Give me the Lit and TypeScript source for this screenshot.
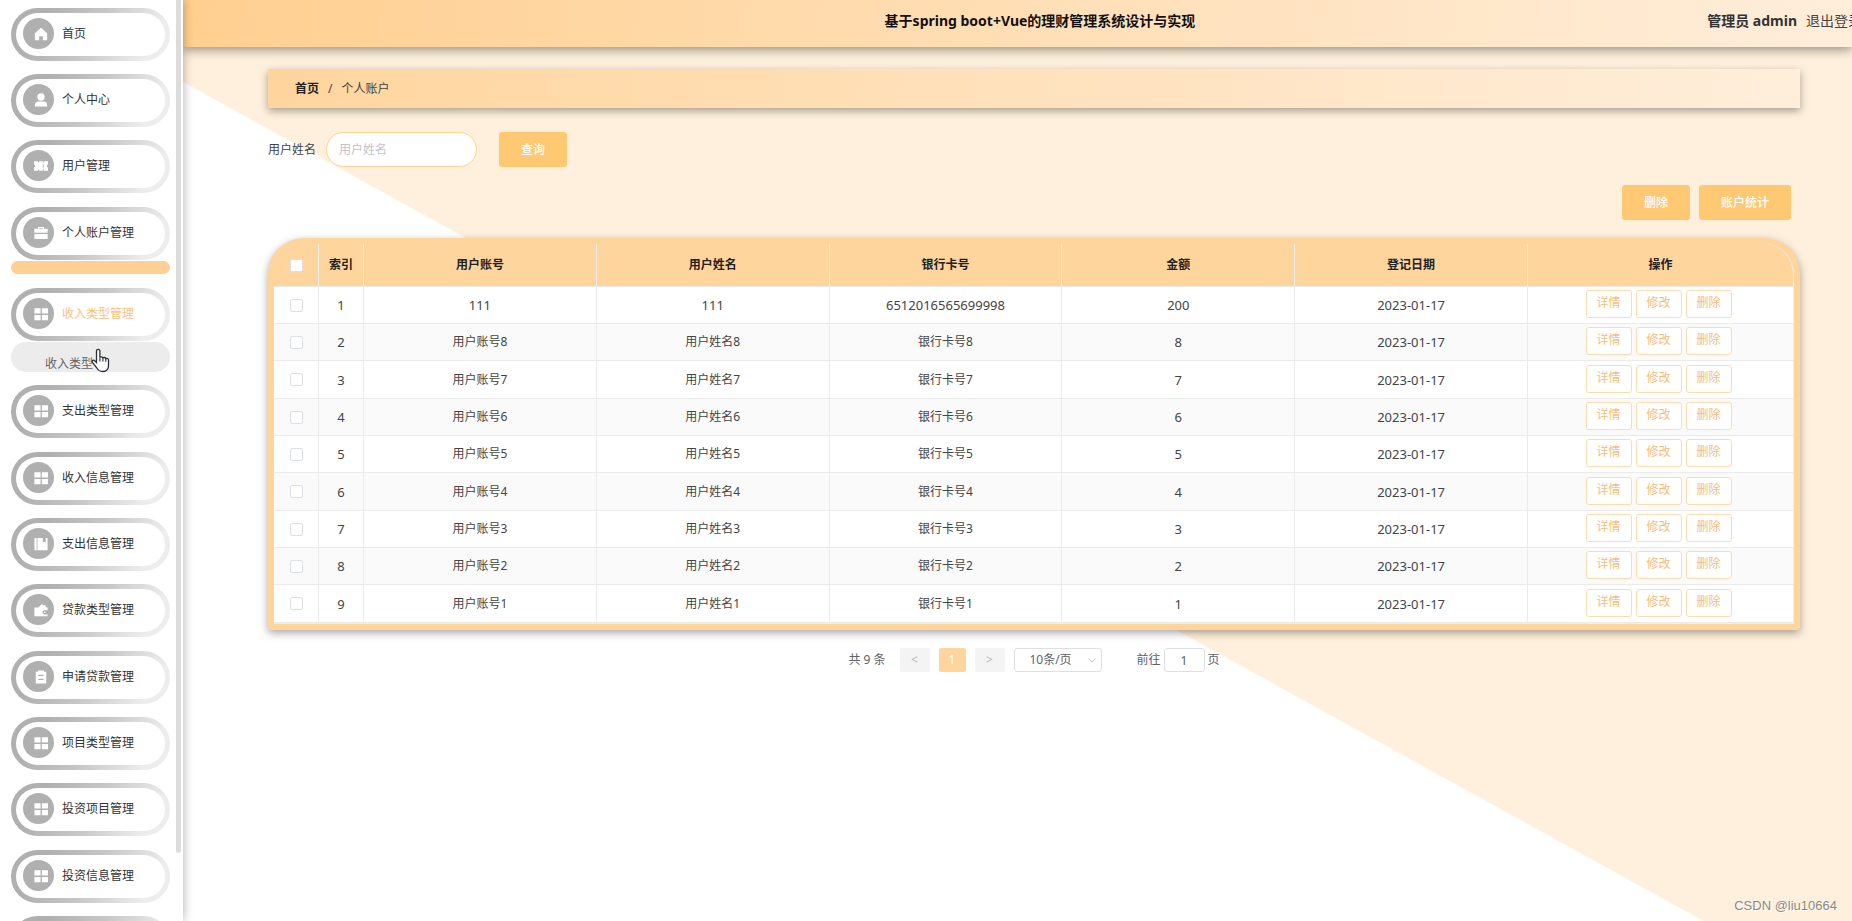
import { LitElement, html, css, svg } from "lit";
import { customElement, state } from "lit/decorators.js";

const ICONS: Record<string, unknown> = {
  home: svg`<path d="M8 .8 15 7v7.2a1 1 0 0 1-1 1h-3.9v-4.6H5.9v4.6H2a1 1 0 0 1-1-1V7z"/>`,
  user: svg`<circle cx="8" cy="4.6" r="4.2"/><path d="M1 15.4v-1.6a4 4 0 0 1 4-4h6a4 4 0 0 1 4 4v1.6z"/>`,
  ticket: svg`<path d="M0 2.6h4.6v1.2h1.2V2.6H16v3.6a1.9 1.9 0 0 0 0 3.6v3.6H5.8v-1.2H4.6v1.2H0V9.800a1.900 1.900 0 0 0 0-3.600z"/><path class="cut" d="M10.600 2v2.400M10.600 6v4M10.600 11.600V14"/>`,
  bag: svg`<path d="M4.500 3V1h7v2h4.100v4.600H.4V3zm1.500 0h4v-.8H6z" fill-rule="evenodd"/><path d="M.4 9.200h15.200v5.600H.4z"/>`,
  grid: svg`<path d="M.5 1.500h7v6h-7zM9 1.500h7v6H9zM.5 9h7v6h-7zM9 9h7v6H9z"/>`,
  book: svg`<path d="M.5 1h2.600v14H.5zM4 1h6v5.600l1.700-1.500 1.700 1.500V1h2.100v14H4z"/>`,
  wallet: svg`<path d="M.5 5.200h4.300L9.200 1l1.500 1.600 2-.4 1.500 3h1.300v3.200h-3.600a2.300 2.300 0 0 0 0 4.600h3.600v2H.5z"/><circle cx="12.200" cy="10.700" r=".9"/>`,
  clipboard: svg`<path fill-rule="evenodd" d="M2 2h2.600V.6h6.800V2H14v13.400H2zm3 3.500v1.300h6V5.500zm0 4.500v1.300h6V10z"/>`,
};

interface MenuEntry {
  label: string;
  icon: string;
  child?: string;
  bar?: boolean;
}

const MENU: MenuEntry[] = [
  { label: "首页", icon: "home" },
  { label: "个人中心", icon: "user" },
  { label: "用户管理", icon: "ticket" },
  { label: "个人账户管理", icon: "bag", bar: true },
  { label: "收入类型管理", icon: "grid", child: "收入类型" },
  { label: "支出类型管理", icon: "grid" },
  { label: "收入信息管理", icon: "grid" },
  { label: "支出信息管理", icon: "book" },
  { label: "贷款类型管理", icon: "wallet" },
  { label: "申请贷款管理", icon: "clipboard" },
  { label: "项目类型管理", icon: "grid" },
  { label: "投资项目管理", icon: "grid" },
  { label: "投资信息管理", icon: "grid" },
  { label: "", icon: "grid" },
];

@customElement("side-menu")
export class SideMenu extends LitElement {
  static styles = css`
    :host {
      display: flex;
      justify-content: space-between;
      height: 100vh;
      overflow: hidden;
      background: #fff;
      box-shadow: 0 0 10px rgba(0, 0, 0, 0.32);
      position: relative;
      z-index: 2;
    }
    .list {
      list-style: none;
      margin: 0;
      padding: 8px 0 0 11px;
      width: 159px;
    }
    .item {
      margin-bottom: 13px;
    }
    .item:nth-child(3n) {
      margin-bottom: 14px;
    }
    .link {
      display: flex;
      align-items: center;
      gap: 8px;
      box-sizing: border-box;
      height: 53px;
      padding: 0 7px 2px;
      border: 5px solid transparent;
      border-radius: 27px;
      background:
        linear-gradient(#fff, #fff) padding-box,
        linear-gradient(120deg, #b0b0b0 20%, #c6c6c6 50%, #ededed 85%) border-box;
      color: #333;
      font-size: 12px;
      line-height: 20px;
      text-decoration: none;
    }
    .link.open {
      color: #f8c27d;
    }
    .disc {
      display: flex;
      align-items: center;
      justify-content: center;
      box-sizing: border-box;
      width: 31px;
      height: 31px;
      padding-left: 5px;
      border-radius: 50%;
      background: #b0b0b0;
    }
    .icon {
      width: 14px;
      height: 14px;
      fill: #fff;
    }
    .cut {
      stroke: #b0b0b0;
      stroke-width: 1;
    }
    .bar {
      height: 13px;
      margin: 1px 0 14px;
      border-radius: 7px;
      background: #ffd094;
    }
    .sub {
      display: block;
      box-sizing: border-box;
      height: 30px;
      margin-top: 1px;
      padding: 12px 0 0 34px;
      border-radius: 15px;
      background: #edecec;
      color: #666;
      font-size: 12px;
      line-height: 20px;
      text-decoration: none;
      overflow: hidden;
    }
    .thumb {
      width: 5px;
      height: 92.6%;
      margin-right: 2px;
      border-radius: 0 0 3px 3px;
      background: #dcdcdc;
    }
    .pointer {
      position: absolute;
      left: 91px;
      top: 348px;
      width: 19px;
      height: 25px;
    }
  `;

  render() {
    return html`
      <ul class="list">
        ${MENU.map(
          (m) => html`<li class="item">
            <a class="link ${m.child ? "open" : ""}" href="#">
              <span class="disc"><svg class="icon" viewBox="0 0 16 16" aria-hidden="true">${ICONS[m.icon]}</svg></span>
              <span>${m.label}</span>
            </a>
            ${m.bar ? html`<div class="bar"></div>` : ""}
            ${m.child ? html`<a class="sub" href="#">${m.child}</a>` : ""}
          </li>`
        )}
      </ul>
      <div class="thumb"></div>
      <svg class="pointer" viewBox="0 0 19 25" aria-hidden="true">
        <path
          d="M5.500 14.500V3a1.700 1.700 0 0 1 3.400 0v6.500c.5-1 2.600-1 3 .4.700-.8 2.600-.5 2.900.7.900-.6 2.700-.2 2.700 1.500v5.400c0 3.500-2 6-5.600 6-3.300 0-4.600-1-6-3.500L1.300 14.200c-.7-1.500 1.200-2.800 2.400-1.500z"
          fill="#fff"
          stroke="#2b2f3a"
          stroke-width="1.300"
        />
        <path d="M8.900 9.500v4M11.900 10v3.500M14.800 10.800v3" stroke="#2b2f3a" stroke-width="1.100" fill="none" />
      </svg>
    `;
  }
}

interface Row {
  account: string;
  name: string;
  card: string;
  amount: string;
}

const ROWS: Row[] = [
  { account: "111", name: "111", card: "6512016565699998", amount: "200" },
  ...[8, 7, 6, 5, 4, 3, 2, 1].map((n) => ({
    account: `用户账号${n}`,
    name: `用户姓名${n}`,
    card: `银行卡号${n}`,
    amount: `${n}`,
  })),
];

@customElement("account-table")
export class AccountTable extends LitElement {
  static styles = css`
    :host {
      display: block;
      box-sizing: border-box;
      border: 6px solid #ffd59e;
      border-radius: 36px 36px 2px 2px;
      background: #ffd59e;
      box-shadow: 0 3px 8px rgba(0, 0, 0, 0.35);
    }
    .table {
      width: 100%;
      table-layout: fixed;
      border-collapse: separate;
      border-spacing: 0;
      border-right: 1px solid #ebeef5;
      border-bottom: 1px solid #ebeef5;
      border-radius: 30px 30px 0 0;
      color: #444;
      font-size: 12px;
      line-height: 20px;
      text-align: center;
    }
    .narrow {
      width: 45px;
    }
    .wide {
      width: 265px;
    }
    th,
    td {
      box-sizing: border-box;
      padding: 0;
      border-right: 1px solid #ebebeb;
      border-bottom: 1px solid #ebebeb;
    }
    th:last-child,
    td:last-child {
      border-right: 0;
    }
    th {
      height: 43px;
      color: #222;
      font-weight: 600;
    }
    td {
      height: 37px;
      background: #fff;
    }
    tr:nth-child(3n) td {
      height: 38px;
    }
    tbody tr:nth-child(even) td {
      background: #fafafa;
    }
    .num {
      font-size: 13px;
    }
    .check {
      appearance: none;
      display: block;
      box-sizing: border-box;
      width: 13px;
      height: 13px;
      margin: 0 auto;
      border: 1px solid #dcdfe6;
      border-radius: 2px;
      background: #fff;
    }
    .ops {
      display: flex;
      justify-content: center;
      gap: 4px;
      padding: 0 4px 2px 0;
    }
    .op {
      box-sizing: border-box;
      width: 46px;
      height: 28px;
      padding: 0 0 2px;
      border: 1px solid #ffdcab;
      border-radius: 3px;
      background: #fff;
      color: #f5bd7c;
      font: inherit;
    }
  `;

  render() {
    return html`
      <table class="table">
        <colgroup>
          <col class="narrow" /><col class="narrow" /><col /><col /><col /><col /><col /><col class="wide" />
        </colgroup>
        <thead>
          <tr>
            <th><input class="check" type="checkbox" aria-label="全选" /></th>
            ${["索引", "用户账号", "用户姓名", "银行卡号", "金额", "登记日期", "操作"].map((h) => html`<th>${h}</th>`)}
          </tr>
        </thead>
        <tbody>
          ${ROWS.map(
            (r, i) => html`<tr>
              <td><input class="check" type="checkbox" aria-label="选择" /></td>
              <td class="num">${i + 1}</td>
              <td class=${i === 0 ? "num" : ""}>${r.account}</td>
              <td class=${i === 0 ? "num" : ""}>${r.name}</td>
              <td class=${i === 0 ? "num" : ""}>${r.card}</td>
              <td class="num">${r.amount}</td>
              <td class="num">2023-01-17</td>
              <td>
                <div class="ops">
                  ${["详情", "修改", "删除"].map((t) => html`<button class="op" type="button">${t}</button>`)}
                </div>
              </td>
            </tr>`
          )}
        </tbody>
      </table>
    `;
  }
}

@customElement("app-root")
export class AppRoot extends LitElement {
  @state() private page = "1";

  static styles = css`
    :host {
      display: grid;
      grid-template-columns: 183px minmax(0, 1fr);
      position: relative;
      height: 100vh;
      overflow: hidden;
      font-family: "Noto Sans", "Noto Sans CJK SC", sans-serif;
      background: #fff;
    }
    .main {
      min-width: 0;
      background: linear-gradient(to bottom left, #fef0dc 54.4%, #fff 54.5%);
    }
    .header {
      overflow: hidden;
      background: linear-gradient(100deg, #ffcf90, #ffeedb);
    }
    .header-wrap {
      box-shadow: 0 3px 10px rgba(0, 0, 0, 0.4);
    }
    .header-row {
      display: grid;
      grid-template-columns: 1fr auto 1fr;
      height: 47px;
      margin-right: -45px;
      padding-bottom: 6px;
      box-sizing: border-box;
      align-items: center;
      font-size: 14px;
      line-height: 20px;
      color: #333;
    }
    .title {
      grid-column: 2;
      margin: 0;
      font-size: 14px;
      font-weight: 700;
      color: #111;
    }
    .account {
      display: flex;
      justify-content: flex-end;
      gap: 9px;
      padding-right: 35px;
      white-space: nowrap;
    }
    .who {
      font-weight: 700;
    }
    .logout {
      color: #444;
      text-decoration: none;
    }
    .content {
      padding: 22px 52px 0 85px;
      font-size: 12px;
      line-height: 20px;
      color: #444;
    }
    .crumbs {
      display: flex;
      align-items: center;
      gap: 9px;
      height: 39px;
      padding: 0 27px;
      background: linear-gradient(100deg, #ffd59e, #ffeedb);
      box-shadow: 0 3px 8px rgba(0, 0, 0, 0.35);
    }
    .crumb-home {
      color: #222;
      font-weight: 600;
      text-decoration: none;
    }
    .search {
      display: flex;
      align-items: center;
      margin-top: 24px;
    }
    .field {
      box-sizing: border-box;
      width: 151px;
      height: 35px;
      margin: 0 22px 0 10px;
      padding: 0 12px;
      border: 1px solid #ffd48f;
      border-radius: 18px;
      background: #fff;
      font: inherit;
      outline: 0;
    }
    .field::placeholder {
      color: #c0c4cc;
    }
    .btn {
      height: 35px;
      padding: 0 22px;
      border: 0;
      border-radius: 3px;
      background: #ffc872;
      color: #fff;
      font: inherit;
      font-weight: 500;
    }
    .actions {
      display: flex;
      justify-content: flex-end;
      gap: 9px;
      margin: 18px 0;
      padding-right: 9px;
    }
    .pager {
      display: flex;
      justify-content: center;
      align-items: center;
      height: 24px;
      margin-top: 18px;
      color: #606266;
    }
    .pg {
      width: 30px;
      height: 24px;
      margin-right: 9px;
      padding: 0;
      border: 0;
      border-radius: 2px;
      background: #f4f4f5;
      color: #b4b8c0;
      font: inherit;
    }
    .total {
      margin-right: 14px;
    }
    .pg.now {
      width: 27px;
      background: #ffd59e;
      color: #fff;
    }
    .size {
      display: grid;
      align-items: center;
      margin-right: 35px;
    }
    .select {
      grid-area: 1 / 1;
      appearance: none;
      box-sizing: border-box;
      width: 88px;
      height: 24px;
      padding: 0 14px 0 0;
      border: 1px solid #dcdfe6;
      border-radius: 3px;
      background: #fff;
      color: #606266;
      font: inherit;
      text-align: center;
      text-align-last: center;
    }
    .chevron {
      grid-area: 1 / 1;
      justify-self: end;
      width: 8px;
      height: 8px;
      margin-right: 6px;
      fill: none;
      stroke: #c0c4cc;
      pointer-events: none;
    }
    .jump {
      display: flex;
      align-items: center;
      gap: 3px;
    }
    .page-no {
      box-sizing: border-box;
      width: 41px;
      height: 24px;
      padding: 0;
      border: 1px solid #dcdfe6;
      border-radius: 3px;
      background: #fff;
      color: #606266;
      font: inherit;
      text-align: center;
    }
    .mark {
      position: absolute;
      right: 15px;
      bottom: 5px;
      color: #8c8880;
      font: 13px/20px "Liberation Sans", sans-serif;
      text-shadow: 1px 1px 0 #fff;
    }
  `;

  render() {
    return html`
      <side-menu></side-menu>
      <main class="main">
        <div class="header-wrap">
          <header class="header">
            <div class="header-row">
              <h1 class="title">基于spring boot+Vue的理财管理系统设计与实现</h1>
              <div class="account">
                <span class="who">管理员 admin</span>
                <a class="logout" href="#">退出登录</a>
              </div>
            </div>
          </header>
        </div>
        <div class="content">
          <nav class="crumbs">
            <a class="crumb-home" href="#">首页</a><span>/</span><span>个人账户</span>
          </nav>
          <form class="search">
            <label for="username">用户姓名</label>
            <input class="field" id="username" type="text" placeholder="用户姓名" />
            <button class="btn" type="button">查询</button>
          </form>
          <div class="actions">
            <button class="btn" type="button">删除</button>
            <button class="btn" type="button">账户统计</button>
          </div>
          <account-table></account-table>
          <div class="pager">
            <span class="total">共 9 条</span>
            <button class="pg" type="button">&lt;</button>
            <button class="pg now" type="button">1</button>
            <button class="pg" type="button">&gt;</button>
            <span class="size">
              <select class="select" aria-label="每页条数">
                <option>10条/页</option>
              </select>
              <svg class="chevron" viewBox="0 0 8 8" aria-hidden="true"><path d="M.5 2.500 4 6l3.500-3.500" /></svg>
            </span>
            <span class="jump">
              <label for="page">前往</label>
              <input class="page-no" id="page" type="text" .value=${this.page} />
              <span>页</span>
            </span>
          </div>
        </div>
      </main>
      <div class="mark">CSDN @liu10664</div>
    `;
  }
}
